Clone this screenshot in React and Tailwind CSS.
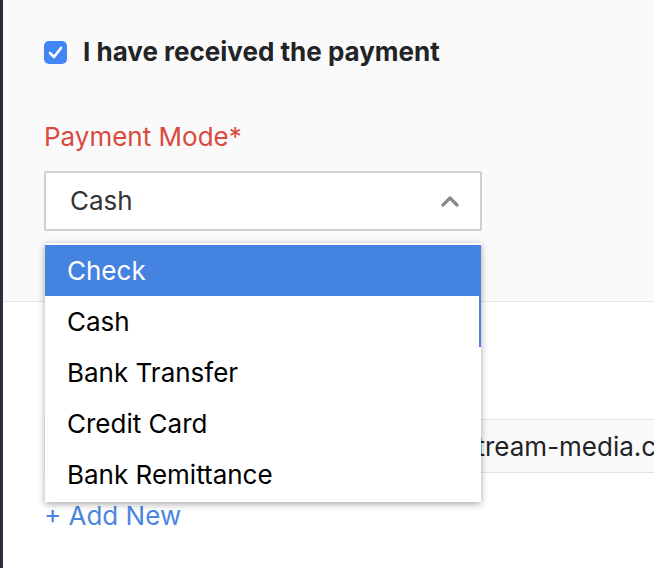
import React from 'react'

const options = ['Check', 'Cash', 'Bank Transfer', 'Credit Card', 'Bank Remittance']

const ChevronUp = () => (
  <svg width="20" height="12" viewBox="0 0 20 12" fill="none">
    <path d="M3 10 L10 3 L17 10" stroke="#8a8a8a" strokeWidth="3.2" strokeLinecap="round" strokeLinejoin="round" />
  </svg>
)

const CheckBox = () => (
  <div className="w-[23px] h-[23px] rounded-[5px] bg-[#4285f4] flex items-center justify-center">
    <svg width="15" height="13" viewBox="0 0 15 13" fill="none">
      <path d="M2 7 L6 11 L13 2" stroke="#fff" strokeWidth="2.6" strokeLinecap="round" strokeLinejoin="round" />
    </svg>
  </div>
)

const App = () => {
  return (
    <div className="relative w-[654px] h-[568px] overflow-hidden bg-white border-l-[3px] border-[#2a2d3a] font-['Inter',sans-serif] text-[26px] leading-[32px]">
      {/* Payment section */}
      <div className="bg-[#fafafa] border-b border-[#e6e6e6] pl-[41px] pt-[36px] h-[302px]">
        <label className="flex items-center gap-[16px]">
          <CheckBox />
          <span className="font-bold text-[#222326]">I have received the payment</span>
        </label>

        <div className="mt-[53px] text-[#d9493f]">Payment Mode*</div>

        <div className="mt-[18px] w-[438px] h-[60px] bg-white border-2 border-[#ccd0d5] rounded-[2px] flex items-center justify-between pl-[24px] pr-[20px]">
          <span className="text-[#333]">Cash</span>
          <ChevronUp />
        </div>
      </div>

      {/* Contact section */}
      <div className="pl-[41px] pt-[117px]">
        <input
          readOnly
          value="accounts@mainstream-media.com"
          className="block w-[640px] h-[54px] bg-[#fafafa] border-y border-[#e3e3e3] outline-none text-[#222326] pl-[222px]"
        />
        <div className="mt-[27px] text-[#4a86e0]">+ Add New</div>
      </div>

      {/* Open dropdown list */}
      <div className="absolute left-[42px] top-[243px] w-[436px] bg-white shadow-[0_2px_7px_rgba(0,0,0,0.35)] py-[2px]">
        {options.map((opt, i) => (
          <div
            key={opt}
            className={`h-[51px] flex items-center pl-[22px] ${i === 0 ? 'bg-[#4583e0] text-white' : 'text-black'} ${i === 1 ? 'border-r-2 border-[#4583e0]' : ''}`}
          >
            {opt}
          </div>
        ))}
      </div>
    </div>
  )
}

export default App
